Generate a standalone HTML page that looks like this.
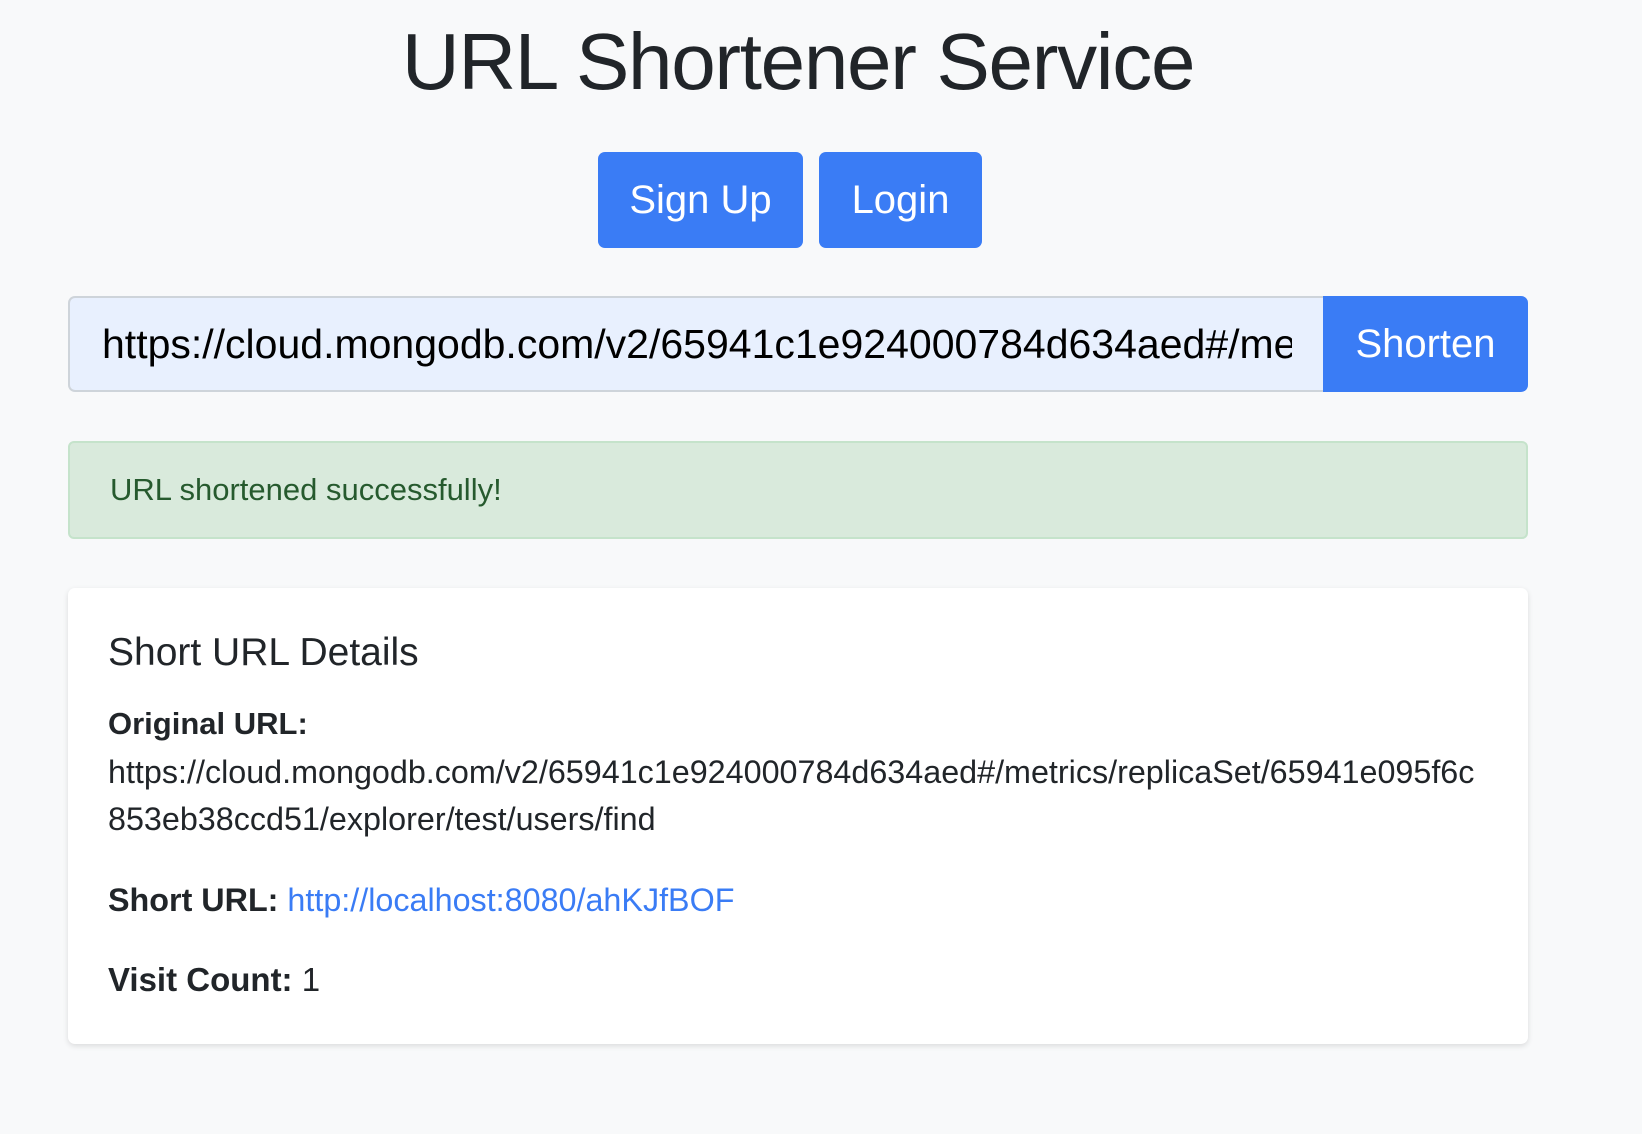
<!DOCTYPE html>
<html><head><meta charset="utf-8"><style>
*{margin:0;padding:0;box-sizing:border-box}
body{width:1642px;height:1134px;background:#f8f9fa;font-family:"Liberation Sans",sans-serif;color:#212529;position:relative;overflow:hidden}
.a{position:absolute;white-space:nowrap}
h1{position:absolute;left:-23px;width:1642px;top:14px;text-align:center;font-weight:400;font-size:80px;line-height:96px;color:#212529;letter-spacing:-1.3px}
.btn{position:absolute;background:#3a7cf5;color:#fff;border-radius:7px;font-size:40px;display:flex;align-items:center;justify-content:center}
.inp{position:absolute;left:68px;top:296px;width:1256px;height:96px;background:#e8f0fe;border:2px solid #ced4da;border-right:none;border-radius:7px 0 0 7px;overflow:hidden}
.inp span{position:absolute;left:32px;top:0;line-height:92px;font-size:41px;color:#000;width:1190px;overflow:hidden;white-space:nowrap}
.alert{position:absolute;left:68px;top:441px;width:1460px;height:98px;background:#d9eadc;border:2px solid #c5e3cb;border-radius:6px}
.alert span{position:absolute;left:40px;top:0;line-height:94px;font-size:31px;color:#265a2e}
.card{position:absolute;left:68px;top:588px;width:1460px;height:456px;background:#fff;border-radius:7px;box-shadow:0 2px 6px rgba(0,0,0,.12)}
.card .a{left:40px;font-size:32px}
b{font-weight:700}
</style></head><body>
<h1>URL Shortener Service</h1>
<div class="btn" style="left:598px;top:152px;width:205px;height:96px">Sign Up</div>
<div class="btn" style="left:819px;top:152px;width:163px;height:96px">Login</div>
<div class="inp"><span>https://cloud.mongodb.com/v2/65941c1e924000784d634aed#/metrics/replicaSet</span></div>
<div class="btn" style="left:1323px;top:296px;width:205px;height:96px;border-radius:0 7px 7px 0">Shorten</div>
<div class="alert"><span>URL shortened successfully!</span></div>
<div class="card">
<div class="a" style="top:43px;font-size:39px;line-height:44px">Short URL Details</div>
<div class="a" style="top:116px;line-height:40px;font-size:31px"><b>Original URL:</b></div>
<div class="a" style="top:164px;line-height:40px;font-size:32.3px">https://cloud.mongodb.com/v2/65941c1e924000784d634aed#/metrics/replicaSet/65941e095f6c</div>
<div class="a" style="top:211px;line-height:40px;font-size:32.3px">853eb38ccd51/explorer/test/users/find</div>
<div class="a" style="top:292px;line-height:40px;font-size:32.3px"><b>Short URL:</b> <span style="color:#3a7cf5">http://localhost:8080/ahKJfBOF</span></div>
<div class="a" style="top:372px;line-height:40px;font-size:33px"><b>Visit Count:</b> 1</div>
</div>
</body></html>
